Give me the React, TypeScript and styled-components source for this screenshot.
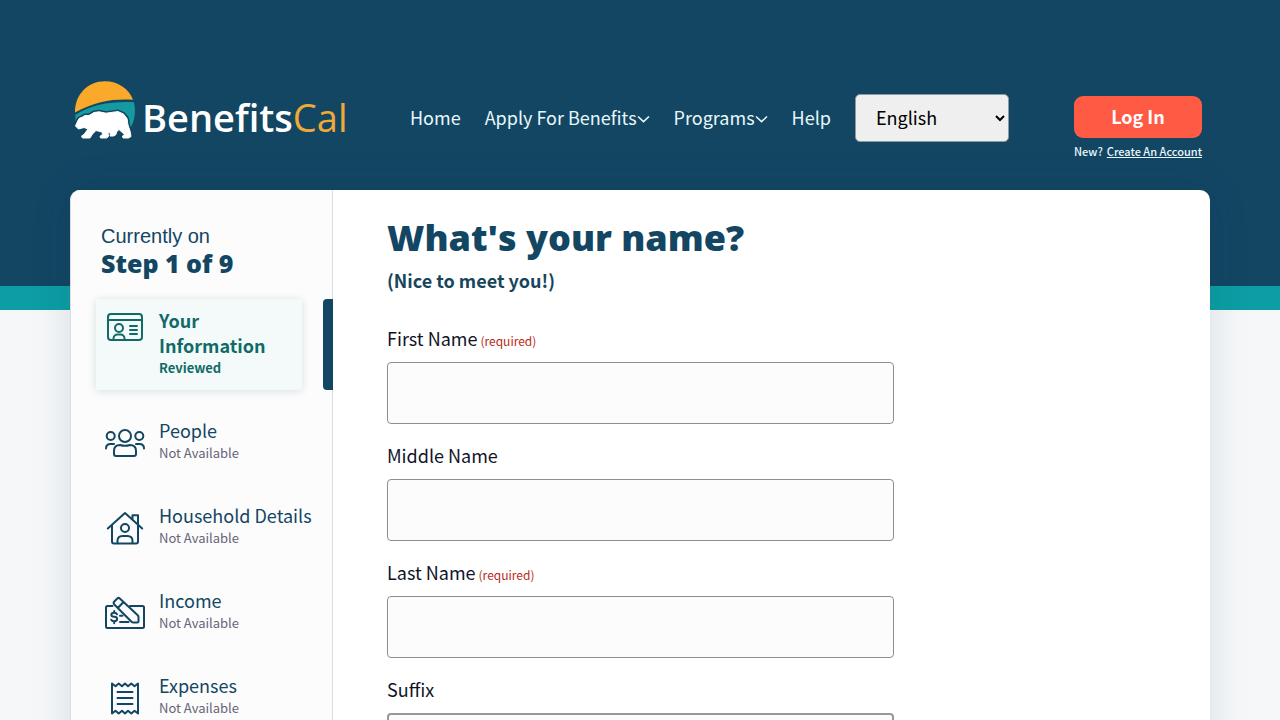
import React from 'react';
import styled, { createGlobalStyle, css } from 'styled-components';

const navy = '#124663';
const teal = '#0d9da4';
const body = '"Noto Sans CJK JP", "Noto Sans CJK SC", sans-serif';

const GlobalStyle = createGlobalStyle`
  *, *::before, *::after { box-sizing: border-box; }
  body {
    margin: 0;
    background: #f5f7f9;
    font-family: ${body};
    font-size: 18px;
    line-height: 25px;
    color: #111428;
  }
`;

const Header = styled.header`
  background: ${navy};
  min-height: 190px;
  padding: 80px 16px 0;
`;

const HeaderRow = styled.div`
  display: flex;
  align-items: flex-start;
  max-width: 1140px;
  margin: 0 auto;
  padding: 0 8px 0 4px;
`;

const Brand = styled.a`
  display: flex;
  width: 272px;
  flex: none;
  gap: 4px;
  text-decoration: none;
  color: #fff;
`;

const BrandName = styled.span`
  padding-top: 12px;
  font-family: "Open Sans", sans-serif;
  font-size: 38px;
  line-height: 50px;
  font-weight: 600;
  white-space: nowrap;
`;

const BrandAccent = styled.span`
  color: #f0a934;
  font-weight: 400;
`;

const Nav = styled.nav`
  display: flex;
  align-items: center;
  gap: 24px;
  margin-left: 64px;
  padding-top: 14px;
`;

const NavLink = styled.a`
  display: flex;
  align-items: center;
  padding-bottom: 2px;
  color: #e9f7fb;
  text-decoration: none;
  white-space: nowrap;
`;

const LanguageSelect = styled.select`
  width: 154px;
  height: 48px;
  padding: 0 0 2px 16px;
  border: 1px solid #8d99a3;
  border-radius: 5px;
  background: #efefef;
  color: #000;
  font: 18px ${body};
`;

const Account = styled.div`
  display: flex;
  flex-direction: column;
  width: 128px;
  margin-left: auto;
  padding-top: 16px;
  gap: 4px;
`;

const LoginButton = styled.button`
  height: 42px;
  padding: 0 6px 2px;
  border: 0;
  border-radius: 9px;
  background: #ff5a44;
  color: #fff;
  font: 700 18px ${body};
`;

const AccountHint = styled.div`
  display: flex;
  justify-content: space-between;
  color: #e9f7fb;
  font-size: 11px;
  line-height: 18px;
  font-weight: 500;
  white-space: nowrap;
`;

const AccountLink = styled.a`
  color: inherit;
`;

const Main = styled.main`
  padding: 0 16px;
  background: linear-gradient(${navy} 96px, ${teal} 96px, ${teal} 120px, #f5f7f9 120px);
`;

const Card = styled.div`
  display: flex;
  max-width: 1140px;
  margin: 0 auto;
  border-radius: 10px;
  background: #fff;
  box-shadow: 0 0 40px rgba(20, 50, 70, 0.12);
`;

const Sidebar = styled.aside`
  flex: none;
  width: 263px;
  padding: 33px 0 40px 25px;
  border: 1px solid #dcdfe2;
  border-width: 0 1px;
  border-radius: 10px 0 0 10px;
  background: #fcfcfc;
`;

const Progress = styled.p`
  margin: 0 0 22px;
  padding-left: 5px;
  color: ${navy};
  font: 20px/26px "Liberation Sans", sans-serif;
`;

const ProgressStep = styled.strong`
  display: block;
  font: 800 25px/28px "Open Sans", sans-serif;
`;

const Steps = styled.ol`
  display: flex;
  flex-direction: column;
  gap: 19px;
  margin: 0;
  padding: 0;
  list-style: none;
`;

const Step = styled.li`
  display: flex;
  justify-content: space-between;
`;

const StepLink = styled.a<{ $active?: boolean }>`
  display: flex;
  flex: 1;
  gap: 14px;
  padding: 9px 0 12px 9px;
  color: ${navy};
  text-decoration: none;
  ${(p) =>
    p.$active &&
    css`
      margin-right: 21px;
      border-radius: 3px;
      background: #f4fafa;
      box-shadow: 0 1px 8px rgba(20, 70, 90, 0.16);
      color: #106b68;
      font-weight: 700;
    `}
`;

const StepMarker = styled.span`
  width: 10px;
  margin-right: -1px;
  border-radius: 4px 0 0 4px;
  background: ${navy};
`;

const StepText = styled.span<{ $active?: boolean }>`
  display: flex;
  flex-direction: column;
  max-width: ${(p) => (p.$active ? '120px' : 'none')};
  white-space: ${(p) => (p.$active ? 'normal' : 'nowrap')};
`;

const StepStatus = styled.span<{ $active?: boolean }>`
  color: ${(p) => (p.$active ? 'inherit' : '#656579')};
  font-size: 13px;
  line-height: 20px;
`;

const StepIcon = styled.svg`
  flex: none;
  margin-top: 5px;
  fill: none;
  stroke: currentColor;
  stroke-width: 2;
  stroke-linecap: round;
  stroke-linejoin: round;
`;

const Form = styled.form`
  flex: 1;
  padding: 24px 54px 60px;
`;

const Title = styled.h1`
  margin: 0;
  color: ${navy};
  font: 800 36px/48px "Open Sans", sans-serif;
`;

const Subtitle = styled.p`
  margin: 6px 0 34px;
  color: #17455c;
  font-weight: 700;
`;

const Field = styled.div`
  display: flex;
  flex-direction: column;
  max-width: 507px;
  gap: 12px;
  margin-bottom: 20px;
`;

const Label = styled.label`
  display: flex;
  align-items: baseline;
  gap: 3px;
  line-height: 23px;
`;

const Required = styled.span`
  color: #b92a20;
  font-size: 12px;
  line-height: 16px;
`;

const fieldBox = css`
  width: 100%;
  height: 62px;
  padding: 0 16px;
  border-radius: 4px;
  background: #fcfcfc;
  font: 18px ${body};
`;

const Input = styled.input`
  ${fieldBox}
  border: 1px solid #8e8e92;
`;

const Select = styled.select`
  ${fieldBox}
  border: 2px solid #97989a;
`;

const ChevronIcon = styled.svg`
  margin-top: 4px;
  fill: none;
  stroke: currentColor;
  stroke-width: 1.6;
`;

const Chevron = () => (
  <ChevronIcon width="13" height="8" viewBox="0 0 13 8" aria-hidden="true">
    <path d="M1 1.500l5.500 5.200L12 1.500" />
  </ChevronIcon>
);

const LogoMark = styled.svg`
  flex: none;
`;

const bear =
  'M1.500 46L3 42.500 5 38.500 8.500 37 11 35.500 15 35.500 20 32.500 25 31.800 32 33.200 39 32.200 44 31.600 49.500 34 53 38.500 54 45 56 51 57 56.500 54.500 58H49L48.500 56 50.500 54.500 45 49.500 42.500 52 42 54.500 39.500 56H36L36.500 53 34 52.500 34.500 56.500 32.500 58H26.500L26 56.300 28.500 54.500 28 52 22 50.500 18.500 54 16 58H8.500L7.500 56 10 54.500 14 49 10 47.500 4.500 49z';

const Logo = () => (
  <LogoMark width="64" height="60" viewBox="0 0 64 60" aria-hidden="true">
    <path d="M1 32.500C1 14 14 1.200 31 1.200c13 0 24 7.500 28 18.500-20-1-36 1-58 12.800z" fill="#fba92b" />
    <path d="M1.300 35C19 24 38 21.300 60 22.300 62.500 33 60 45 54 51L20 44 1.500 41z" fill="#149aa0" />
    <path d={bear} fill={navy} stroke={navy} strokeWidth="4" strokeLinejoin="round" />
    <path d={bear} fill="#fff" stroke="#fff" strokeWidth="1" strokeLinejoin="round" />
  </LogoMark>
);

const IdCardIcon = () => (
  <StepIcon width="40" height="28" viewBox="0 1 40 28" aria-hidden="true">
    <rect x="3" y="2" width="34" height="26" rx="3" />
    <path d="M3 8h34M25 14h7M25 18h7M25 22h7M8.500 27.500v-1a4 4 0 0 1 4-4h3a4 4 0 0 1 4 4v1" />
    <circle cx="14" cy="16" r="4" />
  </StepIcon>
);

const PeopleIcon = () => (
  <StepIcon width="40" height="40" viewBox="0 1 40 40" aria-hidden="true">
    <circle cx="20" cy="14" r="6" />
    <circle cx="5.700" cy="14" r="4" />
    <circle cx="34.300" cy="14" r="4" />
    <path d="M9 32v-3c0-4 2.500-6 6-6 3 1 7 1 10 0 3.500 0 6 2 6 6v3c0 1.500-.7 2-2 2H11c-1.300 0-2-.5-2-2zM1 26.500c0-3 1.800-4.500 4.500-4.500H9M39 26.500c0-3-1.800-4.500-4.500-4.500H31" />
  </StepIcon>
);

const HouseIcon = () => (
  <StepIcon width="40" height="40" viewBox="0 1 40 40" aria-hidden="true">
    <path d="M2.800 21.500L20 6l17.200 15.500M27.500 12V8.300H33v9M7 18v16.500c0 1.200.8 2 2 2h22c1.200 0 2-.8 2-2V18" />
    <circle cx="20" cy="21" r="4" />
    <path d="M12.500 36v-2c0-3 2-5 5-5h5c3 0 5 2 5 5v2" />
  </StepIcon>
);

const IncomeIcon = () => (
  <StepIcon width="40" height="40" viewBox="0 1 40 40" aria-hidden="true">
    <path d="M7.500 14H2.500A1.500 1.500 0 0 0 1 15.500v19A1.500 1.500 0 0 0 2.500 36h35a1.500 1.500 0 0 0 1.500-1.500v-19a1.500 1.500 0 0 0-1.500-1.500H25" />
    <path d="M9.300 9.500l3-3c.8-.8 1.700-.8 2.500 0L32.500 23c.7.7 1 1.300 1 2v4c0 1-.5 1.500-1.500 1.500h-3.500c-.8 0-1.500-.3-2-.8L9.300 12.500c-.9-1-.9-2 0-3zM12.800 16l5.700-6" />
    <path d="M12 22.300c-.5-1-1.500-1.500-2.800-1.500-3.800 0-3.800 4 0 4s3.800 4.500 0 4.500c-1.500 0-2.500-.5-3-1.500M9.200 19v1.500M9.200 29.500v1.800M15 23.800h2.500M15 30h8.500" />
  </StepIcon>
);

const ReceiptIcon = () => (
  <StepIcon width="40" height="40" viewBox="0 1 40 40" aria-hidden="true">
    <path d="M7 6.500l3.500 2.700 3.200-2.700L17 9.200l3-2.700 3 2.700 3.300-2.700 3.200 2.700L33 6.500v30l-3.500-2.700-3.200 2.700-3.300-2.700-3 2.700-3-2.700-3.300 2.700-3.200-2.700L7 36.500zM12.500 15h15M12.500 21h15M12.500 27h15" />
  </StepIcon>
);

const steps = [
  { title: 'Your Information', status: 'Reviewed', Icon: IdCardIcon, active: true },
  { title: 'People', status: 'Not Available', Icon: PeopleIcon },
  { title: 'Household Details', status: 'Not Available', Icon: HouseIcon },
  { title: 'Income', status: 'Not Available', Icon: IncomeIcon },
  { title: 'Expenses', status: 'Not Available', Icon: ReceiptIcon },
];

const fields = [
  { id: 'first-name', label: 'First Name', required: true },
  { id: 'middle-name', label: 'Middle Name', required: false },
  { id: 'last-name', label: 'Last Name', required: true },
];

export default function App() {
  return (
    <>
      <GlobalStyle />
      <Header>
        <HeaderRow>
          <Brand href="#">
            <Logo />
            <BrandName>
              Benefits<BrandAccent>Cal</BrandAccent>
            </BrandName>
          </Brand>
          <Nav>
            <NavLink href="#">Home</NavLink>
            <NavLink href="#">Apply For Benefits<Chevron /></NavLink>
            <NavLink href="#">Programs<Chevron /></NavLink>
            <NavLink href="#">Help</NavLink>
            <LanguageSelect aria-label="Language">
              <option>English</option>
            </LanguageSelect>
          </Nav>
          <Account>
            <LoginButton type="button">Log In</LoginButton>
            <AccountHint>
              New? <AccountLink href="#">Create An Account</AccountLink>
            </AccountHint>
          </Account>
        </HeaderRow>
      </Header>
      <Main>
        <Card>
          <Sidebar>
            <Progress>
              Currently on
              <ProgressStep>Step 1 of 9</ProgressStep>
            </Progress>
            <Steps>
              {steps.map(({ title, status, Icon, active }) => (
                <Step key={title}>
                  <StepLink href="#" $active={active}>
                    <Icon />
                    <StepText $active={active}>
                      {title}
                      <StepStatus $active={active}>{status}</StepStatus>
                    </StepText>
                  </StepLink>
                  {active && <StepMarker />}
                </Step>
              ))}
            </Steps>
          </Sidebar>
          <Form>
            <Title>What's your name?</Title>
            <Subtitle>(Nice to meet you!)</Subtitle>
            {fields.map((field) => (
              <Field key={field.id}>
                <Label htmlFor={field.id}>
                  {field.label}
                  {field.required && <Required>(required)</Required>}
                </Label>
                <Input id={field.id} type="text" />
              </Field>
            ))}
            <Field>
              <Label htmlFor="suffix">Suffix</Label>
              <Select id="suffix">
                <option></option>
              </Select>
            </Field>
          </Form>
        </Card>
      </Main>
    </>
  );
}
